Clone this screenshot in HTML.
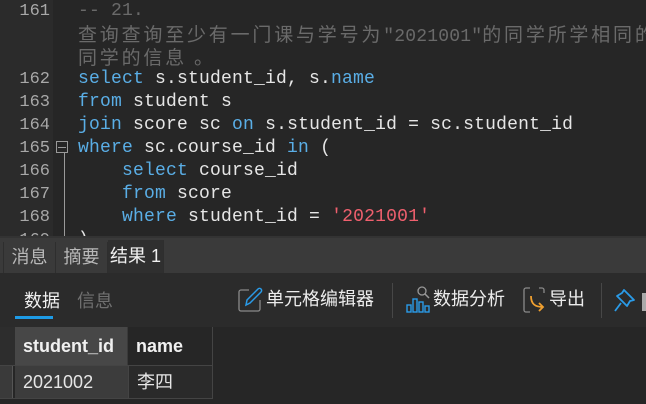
<!DOCTYPE html>
<html><head><meta charset="utf-8"><style>
*{margin:0;padding:0;box-sizing:border-box}
body{width:646px;height:404px;overflow:hidden;background:#262626;position:relative;font-family:"Liberation Sans","Noto Sans CJK SC",sans-serif}
.ed{position:absolute;left:0;top:0;width:646px;height:236px;background:#262626;overflow:hidden}
.gut{position:absolute;left:0;top:0;width:53px;height:236px;background:#2b2b2b}
.ln{position:absolute;left:0;width:50px;height:23px;line-height:23px;text-align:right;color:#a8a8a8;font:17px/23px "Liberation Mono",monospace}
.cl{position:absolute;left:78px;height:23px;white-space:pre;color:#e6e6e6;font:18px/23px "Liberation Mono","Noto Sans CJK SC",monospace;letter-spacing:0.2px}
.k{color:#5aaee6}.c{color:#6a6a6a}.s{color:#f0606e}
.cm{color:#6a6a6a}
.cj{font-family:"Noto Sans CJK SC",sans-serif;font-size:19px;letter-spacing:2.8px}
.tabs{position:absolute;left:0;top:238px;width:646px;height:35px;background:#3a3a3a}
.tab{position:absolute;top:4px;height:31px;font-size:18px;line-height:31px;color:#b8b8b8;text-align:center;border-right:1px solid #2e2e2e}
.tb{position:absolute;left:0;top:273px;width:646px;height:54px;background:#2b2b2b;color:#ececec;font-size:18px;line-height:24px}
.grid{position:absolute;left:0;top:327px;width:646px;height:77px;background:#262626}
.hc{position:absolute;top:0;height:38px;font-weight:bold;color:#f0f0f0;font-size:18px;line-height:38px;padding-left:8px}
.dc{position:absolute;top:39px;height:32px;color:#e6e6e6;font-size:18px;line-height:32px;padding-left:8px}
</style></head><body>
<div class="ed">
<div class="gut"></div>
<div class="ln" style="top:0">161</div>
<div class="ln" style="top:68px">162</div>
<div class="ln" style="top:91px">163</div>
<div class="ln" style="top:114px">164</div>
<div class="ln" style="top:137px">165</div>
<div class="ln" style="top:160px">166</div>
<div class="ln" style="top:183px">167</div>
<div class="ln" style="top:206px">168</div>
<div class="ln" style="top:229px">169</div>
<div class="cl c" style="top:0">-- 21.</div>
<div class="cl cm" style="top:22px"><span class="cj">查询查询至少有一门课与学号为</span>"2021001"<span class="cj">的同学所学相同的</span></div>
<div class="cl cm" style="top:45px"><span class="cj">同学的信息 。</span></div>
<div class="cl" style="top:68px"><span class="k">select</span> s.student_id, s.<span class="k">name</span></div>
<div class="cl" style="top:91px"><span class="k">from</span> student s</div>
<div class="cl" style="top:114px"><span class="k">join</span> score sc <span class="k">on</span> s.student_id = sc.student_id</div>
<div class="cl" style="top:137px"><span class="k">where</span> sc.course_id <span class="k">in</span> (</div>
<div class="cl" style="top:160px">    <span class="k">select</span> course_id</div>
<div class="cl" style="top:183px">    <span class="k">from</span> score</div>
<div class="cl" style="top:206px">    <span class="k">where</span> student_id = <span class="s">'2021001'</span></div>
<div class="cl" style="top:229px">)</div>
<div style="position:absolute;left:56px;top:141px;width:12px;height:12px;border:1px solid #9a9a9a"></div>
<div style="position:absolute;left:58px;top:147px;width:8px;height:1px;background:#9a9a9a"></div>
<div style="position:absolute;left:64px;top:153px;width:1px;height:84px;background:#9a9a9a"></div>
</div>
<div style="position:absolute;left:0;top:236px;width:646px;height:2px;background:#333"></div>
<div class="tabs">
<div class="tab" style="left:3px;width:53px;background:#3a3a3a;border-left:1px solid #2e2e2e">消息</div>
<div class="tab" style="left:56px;width:52px">摘要</div>
<div class="tab" style="left:108px;width:56px;top:2px;height:33px;line-height:33px;background:#2f2f2f;color:#f0f0f0">结果 1</div>
</div>
<div class="tb">
<div style="position:absolute;left:24px;top:16px;color:#f0f0f0">数据</div>
<div style="position:absolute;left:15px;top:43px;width:38px;height:3px;background:#1e9be6"></div>
<div style="position:absolute;left:77px;top:16px;color:#707070">信息</div>
<svg style="position:absolute;left:236px;top:12px" width="30" height="30" viewBox="0 0 30 30"><path d="M13 5H5a2 2 0 0 0-2 2v17a2 2 0 0 0 2 2h17a2 2 0 0 0 2-2v-9" fill="none" stroke="#8a8a8a" stroke-width="1.3"/><path d="M10 20l1-5 11-11a2 2 0 0 1 3 3L14 18z" fill="none" stroke="#2a9be8" stroke-width="1.5"/></svg>
<div style="position:absolute;left:266px;top:14px">单元格编辑器</div>
<div style="position:absolute;left:392px;top:10px;width:1px;height:35px;background:#474747"></div>
<svg style="position:absolute;left:405px;top:12px" width="26" height="30" viewBox="0 0 26 30"><g fill="none" stroke="#2a9be8" stroke-width="1.4"><rect x="2" y="20" width="4" height="7"/><rect x="8" y="14" width="4" height="13"/><rect x="14" y="17" width="4" height="10"/><rect x="20" y="21" width="4" height="6"/></g><circle cx="17" cy="6" r="4" fill="none" stroke="#999" stroke-width="1.3"/><path d="M20 9l4 4" stroke="#999" stroke-width="1.5"/></svg>
<div style="position:absolute;left:433px;top:14px">数据分析</div>
<svg style="position:absolute;left:522px;top:13px" width="26" height="30" viewBox="0 0 26 30"><path d="M8 2H4a2 2 0 0 0-2 2v20a2 2 0 0 0 2 2h4M17 2h3a2 2 0 0 1 2 2v3" fill="none" stroke="#8a8a8a" stroke-width="1.3"/><path d="M9 10c0 8 4 11 12 11M17 17l4 4-4 4" fill="none" stroke="#f0a030" stroke-width="1.8"/></svg>
<div style="position:absolute;left:549px;top:14px">导出</div>
<div style="position:absolute;left:601px;top:10px;width:1px;height:35px;background:#474747"></div>
<svg style="position:absolute;left:612px;top:13px" width="30" height="30" viewBox="0 0 30 30"><path d="M12 4l10 10-4 1-3 5-10-10 5-3z M9 17l-6 8" fill="none" stroke="#2a9be8" stroke-width="1.8" stroke-linejoin="round"/></svg>
<div style="position:absolute;left:642px;top:20px;width:4px;height:18px;background:#aaa"></div>
</div>
<div class="grid">
<div style="position:absolute;left:0;top:0;width:15px;height:38px;background:#2d2d2d"></div>
<div class="hc" style="left:15px;width:113px;background:#474747;border-right:1px solid #3a3a3a">student_id</div>
<div class="hc" style="left:128px;width:85px;background:#262626;border-right:1px solid #444">name</div>
<div style="position:absolute;left:0;top:38px;width:213px;height:1px;background:#444"></div>
<div style="position:absolute;left:0;top:39px;width:13px;height:32px;background:#3a3a3a;border-right:1px solid #555"></div>
<div class="dc" style="left:15px;width:113px;background:#3c3c3c">2021002</div>
<div class="dc" style="left:128px;width:85px;background:#2a2a2a;border-left:1px solid #444;border-right:1px solid #444">李四</div>
<div style="position:absolute;left:0;top:71px;width:213px;height:1px;background:#444"></div>
</div>
</body></html>
